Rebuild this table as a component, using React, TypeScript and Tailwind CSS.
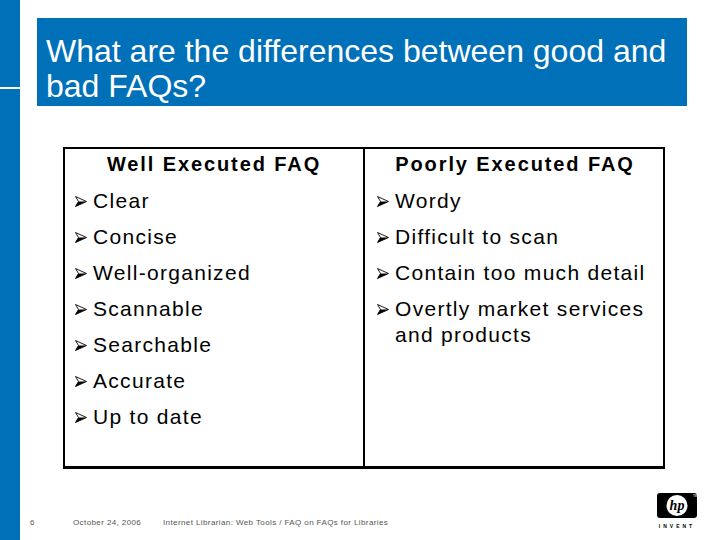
import React from 'react';

const good = ['Clear', 'Concise', 'Well-organized', 'Scannable', 'Searchable', 'Accurate', 'Up to date'];
const bad = ['Wordy', 'Difficult to scan', 'Contain too much detail', 'Overtly market services and products'];

function Arrow() {
  return (
    <svg width="12" height="11" viewBox="0 0 12 11" className="mt-[8px] shrink-0">
      <polygon points="0.5,0.5 11.5,5.5 0.5,10.5 3.5,5.5" fill="white" stroke="black" strokeWidth="0.9" />
      <polygon points="3.5,5.5 11.5,5.5 0.5,10.5" fill="black" />
    </svg>
  );
}

function Column({ title, items, divider }: { title: string; items: string[]; divider?: boolean }) {
  return (
    <div className={divider ? 'w-[300px] flex flex-col border-r-2 border-black' : 'flex-1 flex flex-col'}>
      <div className="h-[30px] flex items-center justify-center text-[20px] font-bold tracking-[1.9px] text-black">
        {title}
      </div>
      <div className={divider ? 'mt-[9px] pl-[10px] pr-[4px] flex flex-col gap-[10px]' : 'mt-[9px] pl-[10px] pr-[4px] flex flex-col gap-[10px]'}>
        {items.map((item) => (
          <div key={item} className="flex items-start gap-[6px]">
            <Arrow />
            <span className="text-[21px] leading-[26px] tracking-[1.3px] text-black">{item}</span>
          </div>
        ))}
      </div>
    </div>
  );
}

function HpLogo() {
  return (
    <div className="flex flex-col items-center">
      <svg width="40" height="25" viewBox="0 0 40 25">
        <rect x="0" y="0" width="40" height="25" rx="3" fill="black" />
        <circle cx="20" cy="12.5" r="10.5" fill="white" />
        <text x="20" y="17" textAnchor="middle" fontFamily="Liberation Serif, serif" fontStyle="italic" fontWeight="bold" fontSize="14" fill="black">hp</text>
        <text x="36" y="4" fontSize="3" fill="white" fontFamily="Liberation Sans, sans-serif">TM</text>
      </svg>
      <div className="mt-[5px] text-[5px] leading-[6px] tracking-[3px] text-black font-bold">INVENT</div>
    </div>
  );
}

export default function App() {
  return (
    <div className="w-[720px] h-[540px] bg-white flex overflow-hidden font-['Liberation_Sans',Arial,sans-serif]">
      <div className="w-[20px] flex flex-col bg-[#0070b8]">
        <div className="h-[87px]" />
        <div className="h-[2px] bg-white" />
      </div>

      <div className="flex-1 flex flex-col">
        <div className="ml-[17px] mt-[18px] w-[650px] h-[88px] bg-[#0070b8] text-white text-[32px] leading-[35px] pl-[9px] pt-[16px]">
          What are the differences between good and
          <br />
          bad FAQs?
        </div>

        <div className="ml-[43px] mt-[41px] w-[602px] h-[322px] border-2 border-b-[3px] border-black flex">
          <Column title="Well Executed FAQ" items={good} divider />
          <div className="w-[2px]" />
          <Column title="Poorly Executed FAQ" items={bad} />
        </div>

        <div className="mt-[24px] pl-[10px] pr-[23px] flex items-start justify-between">
          <div className="mt-[24px] flex items-center text-[8px] leading-[12px] tracking-[0.4px] text-[#555555]">
            <span className="w-[43px]">6</span>
            <span className="w-[90px]">October 24, 2006</span>
            <span>Internet Librarian: Web Tools / FAQ on FAQs for Libraries</span>
          </div>
          <HpLogo />
        </div>
      </div>
    </div>
  );
}
